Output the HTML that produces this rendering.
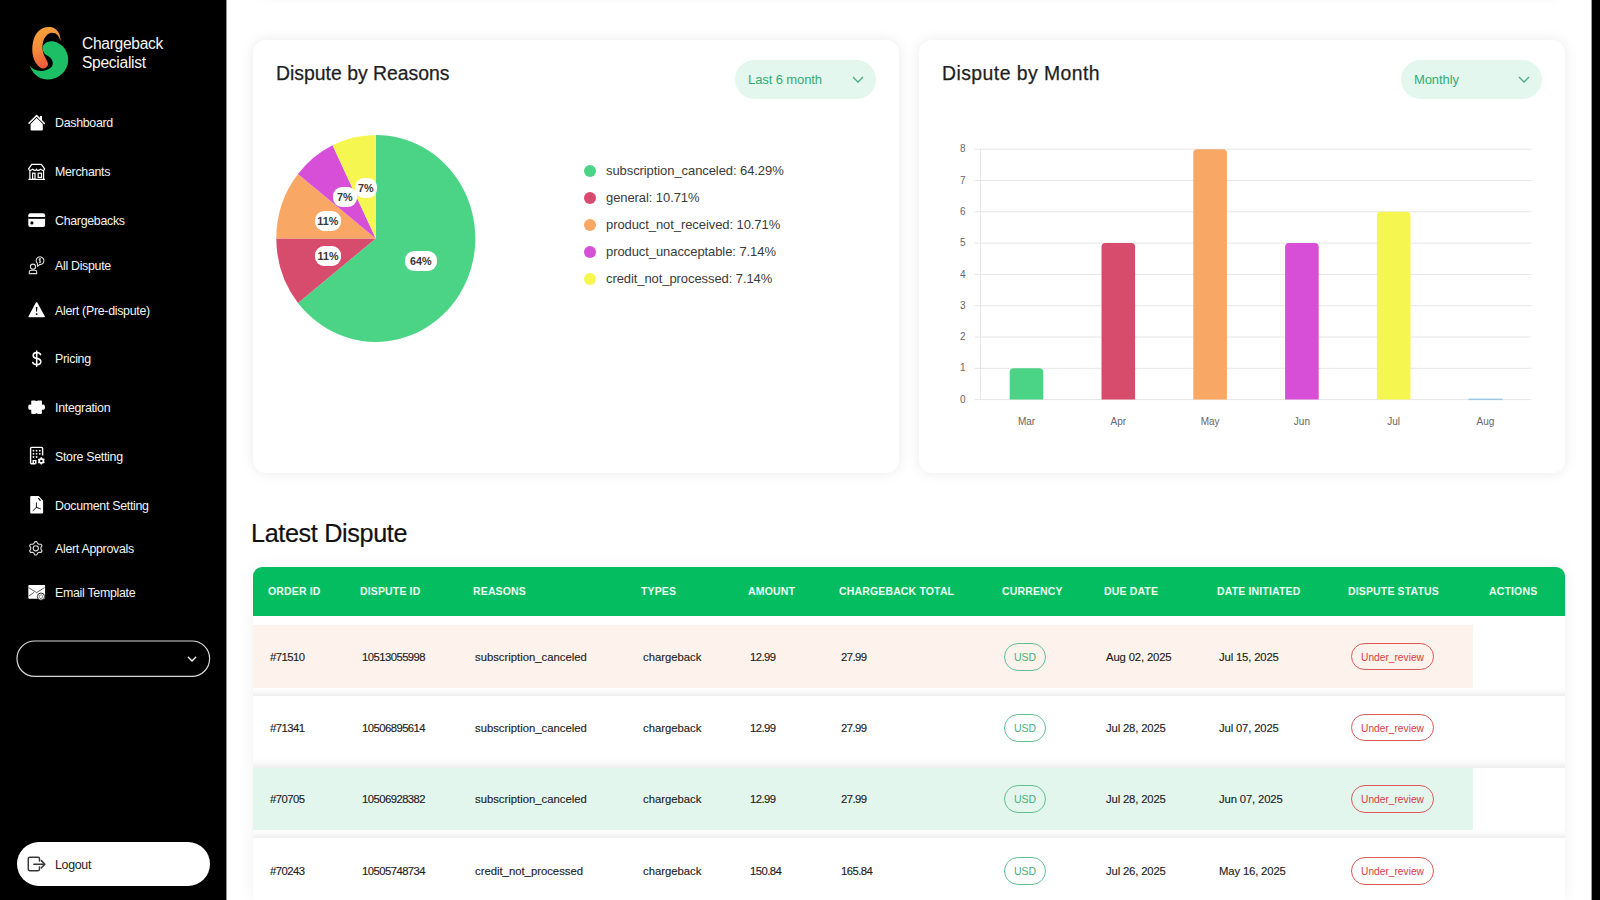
<!DOCTYPE html>
<html><head><meta charset="utf-8">
<style>
*{box-sizing:border-box;margin:0;padding:0}
html,body{width:1600px;height:900px;overflow:hidden;background:#fff;font-family:"Liberation Sans",sans-serif;color:#222}
.abs{position:absolute}
#side{position:absolute;left:0;top:0;width:226px;height:900px;background:#000}
#rbar{position:absolute;left:1592px;top:0;width:8px;height:900px;background:#000}
.nav{position:absolute;left:55px;color:#f4f4f4;font-size:12.4px;line-height:16px;white-space:nowrap;letter-spacing:-0.3px}
.card{position:absolute;top:40px;width:646px;height:433px;background:#fff;border-radius:13px;box-shadow:0 0 14px rgba(0,0,0,0.085)}
.ctitle{position:absolute;left:23px;top:20.5px;font-size:19.4px;line-height:24px;color:#1e1e1e;white-space:nowrap;-webkit-text-stroke:0.25px #1e1e1e}
.pill{position:absolute;top:20px;width:141px;height:39px;border-radius:20px;background:#e3f7ee;color:#34ab73;font-size:13px;line-height:39px;padding-left:13px;letter-spacing:-0.1px}
.pill svg{position:absolute;right:12px;top:16px}
.leg{position:absolute;left:584px;font-size:13px;line-height:16px;color:#3b3b3b;white-space:nowrap;letter-spacing:-0.08px}
.leg i{position:absolute;left:0;top:2px;width:12px;height:12px;border-radius:6px}
.leg span{position:absolute;left:22px;top:0}
.plab{position:absolute;height:20px;background:#fff;border-radius:9px;font-size:10.8px;font-weight:bold;line-height:20px;text-align:center;color:#383838}
.thead{background:#03bd60;border-radius:9px 9px 0 0}
.th{position:absolute;top:585px;font-size:10.5px;font-weight:bold;color:#eefff3;line-height:12px;white-space:nowrap;letter-spacing:0.15px}
.td{position:absolute;font-size:11.3px;line-height:16px;color:#1e1e1e;white-space:nowrap;-webkit-text-stroke:0.15px #1e1e1e}
.num{letter-spacing:-0.55px}
.dt{letter-spacing:-0.15px}
.sep{background:linear-gradient(#fff,#fbfbfb 40%,#efefef 95%,#fff)}
.usd{position:absolute;width:42px;height:28px;border:1.5px solid #62c08f;border-radius:14px;color:#47b07c;font-size:10.5px;line-height:27px;text-align:center}
.ur{position:absolute;width:83px;height:27.5px;border:1.4px solid #de5858;border-radius:14px;color:#d93c40;font-size:10.2px;line-height:27px;text-align:center}
</style></head><body>
<div id="side">
<svg class="abs" style="left:0;top:0" width="226" height="900" viewBox="0 0 226 900">
 <defs>
  <linearGradient id="og" x1="0" y1="0" x2="0.3" y2="1">
   <stop offset="0" stop-color="#f9a83c"/><stop offset="0.55" stop-color="#f58a3a"/><stop offset="1" stop-color="#ef5a3a"/>
  </linearGradient>
 </defs>
 <!-- logo -->
 <path d="M60.5 41.3 C61 34 57 28 50.5 27 C42 26 35 32 33 42 C31 52 33 62 40 67.5 C43 69.5 47 68 48.1 64.7 C48 61 44 57 43 52 C41.5 45 43 37 49 33.5 C54 31 59 34 60.5 41.3 Z" fill="url(#og)"/>
 <path d="M29.5 64.7 C33 72 45 73 51.5 67 C54.5 63 52 57.5 47 55.5 C43 53.5 41.5 48 43.5 45 C46 41 53 40 58 43 C66 47 70 56 67.5 65 C64.5 75 55 80 47 79.5 C38 79 32 73 29.5 64.7 Z" fill="#1cbf66"/>
 <!-- dashboard house -->
 <g transform="translate(24 110)">
  <path d="M5 13.3 L12.6 5.6 L20.4 13.5" fill="none" stroke="#fff" stroke-width="1.5" stroke-linecap="round" stroke-linejoin="round"/>
  <rect x="15.9" y="6" width="2.1" height="4" fill="#fff"/>
  <path d="M6.6 14 L12.6 8 L18.8 14 V19.8 Q18.8 20.5 18 20.5 H7.4 Q6.6 20.5 6.6 19.8 Z" fill="#fff"/>
 </g>
 <!-- merchants store -->
 <g transform="translate(24 159)" fill="none" stroke="#fff" stroke-width="1.2">
  <path d="M7.8 5.3 H17.3 L20.6 9.8 Q20.6 11.3 19 11.3 Q17.6 11.3 16.6 10.2 Q15.2 11.3 14 11.3 Q13 11.3 12.6 10.4 Q12 11.3 11 11.3 Q10 11.3 8.6 10.2 Q7.6 11.3 6.2 11.3 Q4.6 11.3 4.6 9.8 Z"/>
  <path d="M5.9 11.3 V20.2 M19.6 11.3 V20.2 M4.4 20.4 H20.9"/>
  <rect x="8.6" y="14.2" width="2.4" height="6"/>
  <rect x="14.2" y="14.2" width="3.3" height="4.2"/>
 </g>
 <!-- chargebacks card -->
 <g transform="translate(24 207)">
  <rect x="4.3" y="6.2" width="16.8" height="13.7" rx="2" fill="#fff"/>
  <rect x="4.3" y="10" width="16.8" height="1.8" fill="#000"/>
  <circle cx="7.9" cy="15.9" r="1.6" fill="#000"/>
 </g>
 <!-- all dispute -->
 <g transform="translate(24 252)" fill="none" stroke="#ddd" stroke-width="1.1">
  <circle cx="9" cy="14.7" r="2.6"/>
  <path d="M5.3 21.6 V20 Q5.3 18.2 7.5 18.2 H10.6 Q12.7 18.2 12.7 20 V21.6 Z"/>
  <path d="M13.6 14.2 L13.4 11.6 A3.9 3.9 0 1 1 15.6 12.6 Z"/>
  <path d="M17 7 Q15.9 6.5 15.2 7.2 Q14.6 8.2 16 8.7 Q17.3 9.2 16.6 10.3 Q15.9 10.8 14.9 10.3 M15.9 6 V11.2" stroke-width="0.9"/>
 </g>
 <!-- alert triangle -->
 <g transform="translate(24 297)">
  <path d="M12.6 5 Q13 5 13.3 5.6 L20.9 19.4 Q21.1 20.2 20.3 20.2 H4.9 Q4.1 20.2 4.4 19.4 L11.9 5.6 Q12.2 5 12.6 5 Z" fill="#fff"/>
  <path d="M11.8 10.1 H13.4 L13 14.8 H12.2 Z" fill="#000"/>
  <circle cx="12.6" cy="17.1" r="0.95" fill="#000"/>
 </g>
 <!-- pricing $ -->
 <g transform="translate(24 345)" fill="none" stroke="#fff" stroke-width="1.6" stroke-linecap="round">
  <path d="M16.6 9.6 Q15.8 7.6 12.8 7.6 Q9.2 7.6 9.2 10.4 Q9.2 12.8 12.8 13.4 Q16.8 14 16.8 16.8 Q16.8 19.6 12.8 19.6 Q9.6 19.6 8.8 17.4"/>
  <path d="M12.7 5.9 V21.3" stroke-width="1.5"/>
 </g>
 <!-- integration puzzle -->
 <g transform="translate(24 394)" fill="#fff">
  <path d="M8 6.4 H11.3 Q12.5 7.6 13.7 6.4 H17.2 Q17.9 6.4 17.9 7.2 V10.8 Q19 10.2 20.2 10.8 Q21 11.4 21 13.1 Q21 14.8 20.2 15.4 Q19 16 17.9 15.4 V19.1 Q17.9 19.9 17.2 19.9 H13.7 Q12.5 18.7 11.3 19.9 H8 Q7.2 19.9 7.2 19.1 V15.4 Q6.1 16 4.9 15.4 Q4.2 14.8 4.2 13.1 Q4.2 11.4 4.9 10.8 Q6.1 10.2 7.2 10.8 V7.2 Q7.2 6.4 8 6.4 Z"/>
 </g>
 <!-- store setting -->
 <g transform="translate(24 443)">
  <path d="M11.6 20.8 H7.6 Q6.6 20.8 6.6 19.8 V5.4 Q6.6 4.4 7.6 4.4 H17.6 Q18.6 4.4 18.6 5.4 V12.6" fill="none" stroke="#fff" stroke-width="1.4"/>
  <path d="M9.2 20.8 V17.6 H11.8 V20.8" fill="none" stroke="#fff" stroke-width="1.4"/>
  <g fill="#fff">
   <circle cx="9.5" cy="7.7" r="0.9"/><circle cx="12.6" cy="7.7" r="0.9"/><circle cx="15.8" cy="7.7" r="0.9"/>
   <circle cx="9.5" cy="10.8" r="0.9"/><circle cx="12.6" cy="10.8" r="0.9"/><circle cx="15.8" cy="10.8" r="0.9"/>
   <circle cx="9.5" cy="14" r="0.9"/><circle cx="12.6" cy="14" r="0.9"/>
  </g>
  <path d="M16.82 14.23 L17.78 14.23 L18.41 15.22 L19.07 15.60 L20.24 15.65 L20.72 16.48 L20.18 17.52 L20.18 18.28 L20.72 19.32 L20.24 20.15 L19.07 20.20 L18.41 20.58 L17.78 21.57 L16.82 21.57 L16.19 20.58 L15.53 20.20 L14.36 20.15 L13.88 19.32 L14.42 18.28 L14.42 17.52 L13.88 16.48 L14.36 15.65 L15.53 15.60 L16.19 15.22 Z" fill="#fff"/>
  <circle cx="17.3" cy="17.9" r="1.2" fill="#000"/>
 </g>
 <!-- document setting -->
 <g transform="translate(24 492)">
  <path d="M7.2 3.9 H14.7 L19.1 8.7 V20.4 Q19.1 21.4 18.1 21.4 H7.2 Q6.2 21.4 6.2 20.4 V4.9 Q6.2 3.9 7.2 3.9 Z" fill="#fff"/>
  <path d="M14.6 6.4 L16.2 8.4" stroke="#000" stroke-width="1.2" stroke-linecap="round"/>
  <path d="M12.4 10.9 V15.3 L9 18.6 M12.4 15.3 L16.4 16.8" fill="none" stroke="#000" stroke-width="0.9" stroke-linecap="round"/>
 </g>
 <!-- alert approvals gear -->
 <g transform="translate(24 535)" fill="none" stroke="#ddd" stroke-width="1.1" stroke-linejoin="round">
  <path d="M10.93 6.66 L12.67 6.66 L13.75 8.59 L14.90 9.25 L17.12 9.22 L17.99 10.74 L16.86 12.63 L16.86 13.97 L17.99 15.86 L17.12 17.38 L14.90 17.35 L13.75 18.01 L12.67 19.94 L10.93 19.94 L9.85 18.01 L8.70 17.35 L6.48 17.38 L5.61 15.86 L6.74 13.97 L6.74 12.63 L5.61 10.74 L6.48 9.22 L8.70 9.25 L9.85 8.59 Z"/>
  <circle cx="11.8" cy="13.3" r="2.6"/>
 </g>
 <!-- email template -->
 <g transform="translate(24 579)">
  <rect x="4.3" y="6.1" width="16.8" height="13.6" rx="0.8" fill="#fff"/>
  <path d="M4.6 8.6 L12.6 13.6 L20.6 8.6 M4.6 17.2 L10 13.4" fill="none" stroke="#333" stroke-width="0.8"/>
  <circle cx="17" cy="17.6" r="3.6" fill="#fff" stroke="#000" stroke-width="0.8"/>
  <path d="M18.4 19.4 Q17 20 16 19.3 Q14.8 18.4 15.3 17 Q16 15.6 17.6 15.9 Q18.8 16.3 18.6 17.8 Q18.4 18.9 17.6 18.6" fill="none" stroke="#555" stroke-width="0.7"/>
 </g>
 <!-- dropdown -->
 <rect x="17" y="641" width="192.6" height="35.4" rx="17.7" fill="none" stroke="#d8d8d8" stroke-width="1.2"/>
 <path d="M188.3 657.3 L192 661 L195.7 657.3" fill="none" stroke="#fff" stroke-width="1.4" stroke-linecap="round" stroke-linejoin="round"/>
 <!-- logout -->
 <rect x="17" y="842" width="193" height="44" rx="22" fill="#fff"/>
 <g transform="translate(22 850)" fill="none" stroke="#383838" stroke-width="1.5" stroke-linecap="round" stroke-linejoin="round">
  <path d="M17.5 11 V8.6 Q17.5 7.2 16.1 7.2 H7.7 Q6.3 7.2 6.3 8.6 V19.3 Q6.3 20.7 7.7 20.7 H16.1 Q17.5 20.7 17.5 19.3 V17"/>
  <path d="M11.8 14.2 H21.5"/>
  <path d="M19.4 10.6 L22.8 14.2 L19.4 17.8" stroke-width="1.6"/>
 </g>
</svg>
<div class="abs" style="left:82px;top:34px;color:#f6f6f6;font-size:15.6px;line-height:19px;letter-spacing:-0.3px">Chargeback<br>Specialist</div>
<div class="nav" style="top:114.9px">Dashboard</div>
<div class="nav" style="top:164.0px">Merchants</div>
<div class="nav" style="top:212.5px">Chargebacks</div>
<div class="nav" style="top:257.5px">All Dispute</div>
<div class="nav" style="top:302.5px">Alert (Pre-dispute)</div>
<div class="nav" style="top:351.0px">Pricing</div>
<div class="nav" style="top:400.0px">Integration</div>
<div class="nav" style="top:449.0px">Store Setting</div>
<div class="nav" style="top:497.5px">Document Setting</div>
<div class="nav" style="top:541.0px">Alert Approvals</div>
<div class="nav" style="top:585.0px">Email Template</div>
<div class="abs" style="left:55px;top:857px;font-size:12.4px;line-height:16px;color:#222;letter-spacing:-0.3px">Logout</div>
</div><div id="rbar"></div><div class="abs" style="left:226px;top:0;width:1px;height:900px;background:rgba(0,0,0,0.45)"></div><div class="abs" style="left:1591px;top:0;width:1px;height:900px;background:rgba(0,0,0,0.4)"></div>


<div class="abs" style="left:253px;top:-60px;width:1312px;height:60px;border-radius:14px;box-shadow:0 0 8px rgba(0,0,0,0.035);background:#fff"></div>
<div class="card" style="left:253px">
  <div class="ctitle">Dispute by Reasons</div>
  <div class="pill" style="left:482px">Last 6 month<svg width="12" height="8" viewBox="0 0 12 8"><path d="M1 1 L6 6 L11 1" fill="none" stroke="#4aae80" stroke-width="1.3"/></svg></div>
</div>
<div class="card" style="left:919px">
  <div class="ctitle" style="letter-spacing:0.45px">Dispute by Month</div>
  <div class="pill" style="left:482px">Monthly<svg width="12" height="8" viewBox="0 0 12 8"><path d="M1 1 L6 6 L11 1" fill="none" stroke="#4aae80" stroke-width="1.3"/></svg></div>
</div>


<svg class="abs" style="left:0;top:0" width="1600" height="900" viewBox="0 0 1600 900">
<g transform="translate(375.8 238.4) scale(0.995 1.035)">
<path d="M0 0 L0.00 -100.00 A100 100 0 1 1 -78.20 62.33 Z" fill="#4cd486"/>
<path d="M0 0 L-78.20 62.33 A100 100 0 0 1 -100.00 0.00 Z" fill="#d74c6d"/>
<path d="M0 0 L-100.00 0.00 A100 100 0 0 1 -78.20 -62.33 Z" fill="#f8a764"/>
<path d="M0 0 L-78.20 -62.33 A100 100 0 0 1 -43.43 -90.08 Z" fill="#d64fd6"/>
<path d="M0 0 L-43.43 -90.08 A100 100 0 0 1 -0.06 -100.00 Z" fill="#f6f650"/>
</g>
</svg>
<div class="plab" style="left:404.7px;top:251.0px;width:32px">64%</div>
<div class="plab" style="left:354.7px;top:178.0px;width:22px">7%</div>
<div class="plab" style="left:332.8px;top:187.3px;width:24px">7%</div>
<div class="plab" style="left:314.8px;top:210.7px;width:26px">11%</div>
<div class="plab" style="left:315.0px;top:245.5px;width:26px">11%</div>
<div class="leg" style="top:163.2px"><i style="background:#4cd486"></i><span>subscription_canceled: 64.29%</span></div>
<div class="leg" style="top:190.3px"><i style="background:#d74c6d"></i><span>general: 10.71%</span></div>
<div class="leg" style="top:217.0px"><i style="background:#f8a764"></i><span>product_not_received: 10.71%</span></div>
<div class="leg" style="top:244.0px"><i style="background:#d64fd6"></i><span>product_unacceptable: 7.14%</span></div>
<div class="leg" style="top:271.2px"><i style="background:#f6f650"></i><span>credit_not_processed: 7.14%</span></div>
<svg class="abs" style="left:0;top:0" width="1600" height="900" viewBox="0 0 1600 900">
<line x1="974.5" y1="399.6" x2="1531.5" y2="399.6" stroke="#e6e6e6" stroke-width="1"/>
<text x="965.5" y="402.7" text-anchor="end" font-size="10" fill="#666" font-family="Liberation Sans">0</text>
<line x1="974.5" y1="368.3" x2="1531.5" y2="368.3" stroke="#e6e6e6" stroke-width="1"/>
<text x="965.5" y="371.4" text-anchor="end" font-size="10" fill="#666" font-family="Liberation Sans">1</text>
<line x1="974.5" y1="337.0" x2="1531.5" y2="337.0" stroke="#e6e6e6" stroke-width="1"/>
<text x="965.5" y="340.1" text-anchor="end" font-size="10" fill="#666" font-family="Liberation Sans">2</text>
<line x1="974.5" y1="305.7" x2="1531.5" y2="305.7" stroke="#e6e6e6" stroke-width="1"/>
<text x="965.5" y="308.8" text-anchor="end" font-size="10" fill="#666" font-family="Liberation Sans">3</text>
<line x1="974.5" y1="274.4" x2="1531.5" y2="274.4" stroke="#e6e6e6" stroke-width="1"/>
<text x="965.5" y="277.5" text-anchor="end" font-size="10" fill="#666" font-family="Liberation Sans">4</text>
<line x1="974.5" y1="243.1" x2="1531.5" y2="243.1" stroke="#e6e6e6" stroke-width="1"/>
<text x="965.5" y="246.2" text-anchor="end" font-size="10" fill="#666" font-family="Liberation Sans">5</text>
<line x1="974.5" y1="211.8" x2="1531.5" y2="211.8" stroke="#e6e6e6" stroke-width="1"/>
<text x="965.5" y="214.9" text-anchor="end" font-size="10" fill="#666" font-family="Liberation Sans">6</text>
<line x1="974.5" y1="180.5" x2="1531.5" y2="180.5" stroke="#e6e6e6" stroke-width="1"/>
<text x="965.5" y="183.6" text-anchor="end" font-size="10" fill="#666" font-family="Liberation Sans">7</text>
<line x1="974.5" y1="149.2" x2="1531.5" y2="149.2" stroke="#e6e6e6" stroke-width="1"/>
<text x="965.5" y="152.3" text-anchor="end" font-size="10" fill="#666" font-family="Liberation Sans">8</text>
<line x1="980.5" y1="149.2" x2="980.5" y2="399.6" stroke="#e6e6e6" stroke-width="1"/>
<path d="M1009.7 399.6 V372.3 Q1009.7 368.3 1013.7 368.3 H1039.3 Q1043.3 368.3 1043.3 372.3 V399.6 Z" fill="#4cd486"/>
<text x="1026.5" y="424.5" text-anchor="middle" font-size="10" fill="#666" font-family="Liberation Sans">Mar</text>
<path d="M1101.5 399.6 V247.1 Q1101.5 243.1 1105.5 243.1 H1131.1 Q1135.1 243.1 1135.1 247.1 V399.6 Z" fill="#d74c6d"/>
<text x="1118.3" y="424.5" text-anchor="middle" font-size="10" fill="#666" font-family="Liberation Sans">Apr</text>
<path d="M1193.3 399.6 V153.2 Q1193.3 149.2 1197.3 149.2 H1222.9 Q1226.9 149.2 1226.9 153.2 V399.6 Z" fill="#f8a764"/>
<text x="1210.1" y="424.5" text-anchor="middle" font-size="10" fill="#666" font-family="Liberation Sans">May</text>
<path d="M1285.1 399.6 V247.1 Q1285.1 243.1 1289.1 243.1 H1314.7 Q1318.7 243.1 1318.7 247.1 V399.6 Z" fill="#d64fd6"/>
<text x="1301.9" y="424.5" text-anchor="middle" font-size="10" fill="#666" font-family="Liberation Sans">Jun</text>
<path d="M1376.9 399.6 V215.8 Q1376.9 211.8 1380.9 211.8 H1406.5 Q1410.5 211.8 1410.5 215.8 V399.6 Z" fill="#f6f650"/>
<text x="1393.7" y="424.5" text-anchor="middle" font-size="10" fill="#666" font-family="Liberation Sans">Jul</text>
<rect x="1468.5" y="398.6" width="34" height="1.5" fill="#9cc9e6"/>
<text x="1485.5" y="424.5" text-anchor="middle" font-size="10" fill="#666" font-family="Liberation Sans">Aug</text>
</svg>
<div class="abs" style="left:251px;top:518px;font-size:25.2px;line-height:30px;color:#111;letter-spacing:-0.35px;-webkit-text-stroke:0.2px #111">Latest Dispute</div>
<div class="abs" style="left:253px;top:566.5px;width:1312px;height:333.5px;background:#fff;box-shadow:0 0 16px rgba(0,0,0,0.06);border-radius:9px 9px 0 0"></div>
<div class="abs thead" style="left:253px;top:566.5px;width:1312px;height:49.5px"></div>
<div class="th" style="left:268px">ORDER ID</div>
<div class="th" style="left:360px">DISPUTE ID</div>
<div class="th" style="left:473px">REASONS</div>
<div class="th" style="left:641px">TYPES</div>
<div class="th" style="left:748px">AMOUNT</div>
<div class="th" style="left:839px">CHARGEBACK TOTAL</div>
<div class="th" style="left:1002px">CURRENCY</div>
<div class="th" style="left:1104px">DUE DATE</div>
<div class="th" style="left:1217px">DATE INITIATED</div>
<div class="th" style="left:1348px">DISPUTE STATUS</div>
<div class="th" style="left:1489px">ACTIONS</div>
<div class="abs" style="left:253px;top:624.5px;width:1220px;height:63.1px;background:#fdf3ec"></div>
<div class="abs sep" style="left:253px;top:687.6px;width:1312px;height:8.4px"></div>
<div class="td num" style="left:270px;top:648.5px">#71510</div>
<div class="td num" style="left:362px;top:648.5px">10513055998</div>
<div class="td" style="left:475px;top:648.5px">subscription_canceled</div>
<div class="td" style="left:643px;top:648.5px">chargeback</div>
<div class="td num" style="left:750px;top:648.5px">12.99</div>
<div class="td num" style="left:841px;top:648.5px">27.99</div>
<div class="td dt" style="left:1106px;top:648.5px">Aug 02, 2025</div>
<div class="td dt" style="left:1219px;top:648.5px">Jul 15, 2025</div>
<div class="usd" style="left:1004px;top:642.5px">USD</div>
<div class="ur" style="left:1351px;top:642.5px">Under_review</div>
<div class="abs sep" style="left:253px;top:758.0px;width:1312px;height:9.5px"></div>
<div class="td num" style="left:270px;top:719.5px">#71341</div>
<div class="td num" style="left:362px;top:719.5px">10506895614</div>
<div class="td" style="left:475px;top:719.5px">subscription_canceled</div>
<div class="td" style="left:643px;top:719.5px">chargeback</div>
<div class="td num" style="left:750px;top:719.5px">12.99</div>
<div class="td num" style="left:841px;top:719.5px">27.99</div>
<div class="td dt" style="left:1106px;top:719.5px">Jul 28, 2025</div>
<div class="td dt" style="left:1219px;top:719.5px">Jul 07, 2025</div>
<div class="usd" style="left:1004px;top:713.5px">USD</div>
<div class="ur" style="left:1351px;top:713.5px">Under_review</div>
<div class="abs" style="left:253px;top:767.5px;width:1220px;height:62.1px;background:#e3f6ed"></div>
<div class="abs sep" style="left:253px;top:829.6px;width:1312px;height:8.4px"></div>
<div class="td num" style="left:270px;top:791.0px">#70705</div>
<div class="td num" style="left:362px;top:791.0px">10506928382</div>
<div class="td" style="left:475px;top:791.0px">subscription_canceled</div>
<div class="td" style="left:643px;top:791.0px">chargeback</div>
<div class="td num" style="left:750px;top:791.0px">12.99</div>
<div class="td num" style="left:841px;top:791.0px">27.99</div>
<div class="td dt" style="left:1106px;top:791.0px">Jul 28, 2025</div>
<div class="td dt" style="left:1219px;top:791.0px">Jun 07, 2025</div>
<div class="usd" style="left:1004px;top:785.0px">USD</div>
<div class="ur" style="left:1351px;top:785.0px">Under_review</div>
<div class="td num" style="left:270px;top:863.0px">#70243</div>
<div class="td num" style="left:362px;top:863.0px">10505748734</div>
<div class="td" style="left:475px;top:863.0px">credit_not_processed</div>
<div class="td" style="left:643px;top:863.0px">chargeback</div>
<div class="td num" style="left:750px;top:863.0px">150.84</div>
<div class="td num" style="left:841px;top:863.0px">165.84</div>
<div class="td dt" style="left:1106px;top:863.0px">Jul 26, 2025</div>
<div class="td dt" style="left:1219px;top:863.0px">May 16, 2025</div>
<div class="usd" style="left:1004px;top:857.0px">USD</div>
<div class="ur" style="left:1351px;top:857.0px">Under_review</div>

</body></html>
